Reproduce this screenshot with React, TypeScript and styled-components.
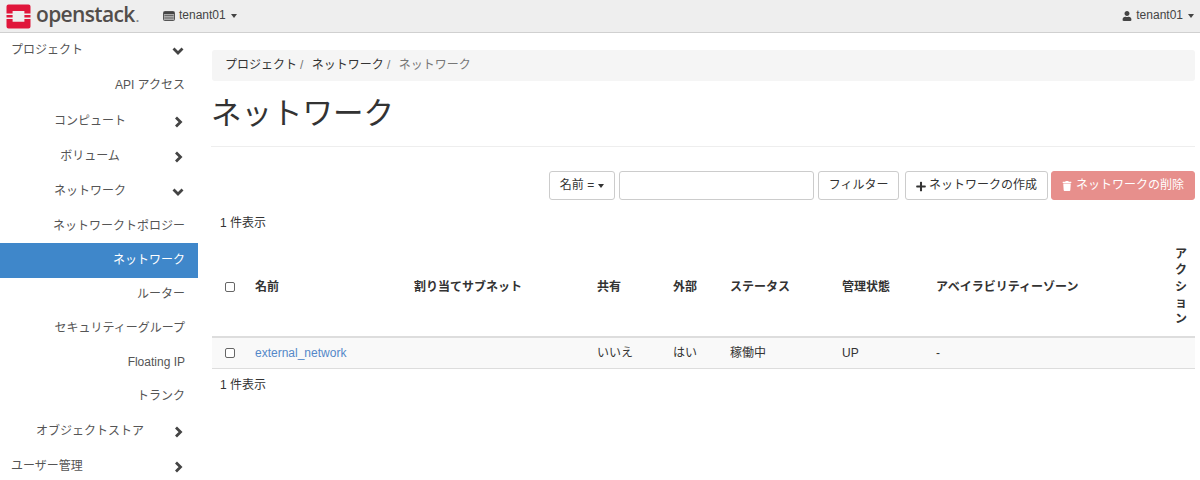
import React from "react";
import styled, { createGlobalStyle } from "styled-components";
import { FaPlus, FaTrash, FaUser } from "react-icons/fa";

const Global = createGlobalStyle`
  html, body { margin: 0; padding: 0; background: #fff; }
  body {
    font-family: "Liberation Sans", "Noto Sans CJK JP", sans-serif;
    font-size: 12px;
    line-height: 1.428;
    color: #333;
    width: 1200px;
    height: 480px;
    overflow: hidden;
  }
  * { box-sizing: border-box; }
`;

const Navbar = styled.header`
  height: 33px;
  background: #eeeeee;
  border-bottom: 1px solid #d0d0d0;
  display: flex;
  align-items: center;
  padding: 0 6px 0 6px;
`;
const Brand = styled.div`
  display: flex;
  align-items: center;
  gap: 5px;
  width: 157px;
`;
const BrandName = styled.span`
  font-family: "Open Sans", sans-serif;
  font-size: 21px;
  font-weight: 600;
  letter-spacing: -0.65px;
  color: #524d4b;
  line-height: 1;
  margin-top: -3px;
`;
const BrandDot = styled.span`
  font-family: "Open Sans", sans-serif;
  font-size: 12px;
  font-weight: 700;
  color: #888;
  line-height: 1;
  align-self: flex-end;
  margin-left: -4px;
  margin-bottom: 5px;
`;
const NavItem = styled.div`
  display: flex;
  align-items: center;
  gap: 4px;
  font-size: 12px;
  color: #444;
`;
const Spacer = styled.div`
  flex: 1;
`;
const Caret = styled.span`
  display: inline-block;
  width: 0;
  height: 0;
  margin-left: 1px;
  border-top: 4px solid currentColor;
  border-left: 3.5px solid transparent;
  border-right: 3.5px solid transparent;
`;
const Body = styled.div`
  display: flex;
  height: 447px;
`;
const Sidebar = styled.nav`
  width: 198px;
  flex: none;
  display: flex;
  flex-direction: column;
`;
const MenuRow = styled.div<{ $kind: "top" | "group" | "leaf"; $active?: boolean; $h: number }>`
  height: ${(p) => p.$h}px;
  flex: none;
  display: flex;
  align-items: center;
  position: relative;
  color: ${(p) => (p.$active ? "#fff" : "#555")};
  background: ${(p) => (p.$active ? "#3f87ca" : "transparent")};
  justify-content: ${(p) => (p.$kind === "leaf" ? "flex-end" : p.$kind === "group" ? "center" : "flex-start")};
  padding: ${(p) => (p.$kind === "leaf" ? "0 13px 0 0" : p.$kind === "group" ? "0 18px 0 0" : "0 0 0 11px")};
`;
const MenuArrow = styled.svg`
  position: absolute;
  left: 171px;
  top: 50%;
  transform: translateY(-50%);
  width: 14px;
  height: 14px;
  fill: none;
  stroke: #444;
  stroke-width: 2.8;
`;
const Main = styled.main`
  flex: 1;
  padding: 17px 5px 0 14px;
  min-width: 0;
`;
const Breadcrumb = styled.div`
  height: 31px;
  background: #f5f5f5;
  border-radius: 3px;
  display: flex;
  align-items: center;
  padding-left: 13px;
  color: #333;
`;
const Crumb = styled.span<{ $current?: boolean }>`
  color: ${(p) => (p.$current ? "#777" : "#333")};
`;
const CrumbSep = styled.span`
  color: #777;
  padding: 0 8.5px 0 3px;
`;
const Title = styled.h1`
  margin: 0 0 0 -1px;
  height: 66px;
  display: flex;
  align-items: center;
  font-size: 30.5px;
  font-weight: 400;
  color: #333;
  border-bottom: 1px solid #eeeeee;
`;
const Toolbar = styled.div`
  display: flex;
  justify-content: flex-end;
  gap: 4px;
  margin-top: 24px;
`;
const ActionGroup = styled.div`
  display: flex;
  gap: 3px;
  margin-left: 2px;
`;
const Button = styled.button<{ $danger?: boolean }>`
  height: 29px;
  padding: 1px 10px 0;
  font: inherit;
  font-size: 12px;
  border-radius: 3px;
  display: inline-flex;
  align-items: center;
  gap: 3px;
  background: ${(p) => (p.$danger ? "#e78f8c" : "#fff")};
  color: ${(p) => (p.$danger ? "#fff" : "#333")};
  border: 1px solid ${(p) => (p.$danger ? "#e78f8c" : "#ccc")};
`;
const FilterButton = styled(Button)`
  padding: 1px 9.5px 0;
`;
const IconSlot = styled.span<{ $wide?: boolean }>`
  display: inline-flex;
  font-size: ${(p) => (p.$wide ? 10 : 11)}px;
  width: ${(p) => (p.$wide ? 11 : 10)}px;
  justify-content: center;
`;
const FilterInput = styled.input`
  width: 195px;
  height: 29px;
  border: 1px solid #ccc;
  border-radius: 3px;
  background: #fff;
`;
const Count = styled.div`
  padding-left: 8px;
  font-size: 12px;
  color: #333;
`;
const TopCount = styled(Count)`
  margin-top: 15px;
`;
const BottomCount = styled(Count)`
  margin-top: 8px;
`;
const Table = styled.table`
  width: 983px;
  table-layout: fixed;
  border-collapse: collapse;
  margin-top: 6px;
`;
const Th = styled.th`
  text-align: left;
  font-weight: 700;
  padding: 8px;
  font-size: 12px;
  line-height: 16.3px;
  border-bottom: 2px solid #ddd;
  vertical-align: middle;
  color: #333;
`;
const Row = styled.tr`
  background: #f9f9f9;
`;
const Td = styled.td`
  padding: 1px 8px 0;
  height: 32px;
  font-size: 12px;
  border-bottom: 1px solid #ddd;
  vertical-align: middle;
  color: #333;
`;
const Link = styled.a`
  color: #5488c8;
`;
const Check = styled.span`
  display: block;
  width: 10px;
  height: 10px;
  margin-left: 5px;
  border: 1.5px solid #666;
  border-radius: 2px;
  background: #fff;
`;
const LogoSvg = styled.svg`
  flex: none;
`;

const menu: { label: string; kind: "top" | "group" | "leaf"; arrow?: "down" | "right"; active?: boolean; h: number }[] = [
  { label: "プロジェクト", kind: "top", arrow: "down", h: 35 },
  { label: "API アクセス", kind: "leaf", h: 36 },
  { label: "コンピュート", kind: "group", arrow: "right", h: 35 },
  { label: "ボリューム", kind: "group", arrow: "right", h: 35 },
  { label: "ネットワーク", kind: "group", arrow: "down", h: 36 },
  { label: "ネットワークトポロジー", kind: "leaf", h: 33 },
  { label: "ネットワーク", kind: "leaf", active: true, h: 35 },
  { label: "ルーター", kind: "leaf", h: 34 },
  { label: "セキュリティーグループ", kind: "leaf", h: 33.5 },
  { label: "Floating IP", kind: "leaf", h: 34 },
  { label: "トランク", kind: "leaf", h: 35 },
  { label: "オブジェクトストア", kind: "group", arrow: "right", h: 35 },
  { label: "ユーザー管理", kind: "top", arrow: "right", h: 35 },
];

const widths = [35, 159, 183, 76, 57, 112, 94, 239, 28];
const headers = ["名前", "割り当てサブネット", "共有", "外部", "ステータス", "管理状態", "アベイラビリティーゾーン", "アクション"];

const Logo = () => (
  <LogoSvg width="25" height="25" viewBox="0 0 25 25">
    <path
      fill="#e0163b"
      fillRule="evenodd"
      d="M2.5 0.5H22.5A2 2 0 0 1 24.5 2.5V9.6H18.4V7H6.6V9.6H0.5V2.5A2 2 0 0 1 2.5 0.5ZM0.5 15H6.6V17.8H18.4V15H24.5V22.5A2 2 0 0 1 22.5 24.5H2.5A2 2 0 0 1 0.5 22.5ZM0.5 11H6.6V13.6H0.5ZM18.4 11H24.5V13.6H18.4Z"
    />
  </LogoSvg>
);

const TenantIcon = () => (
  <svg width="12" height="10" viewBox="0 0 12 10">
    <rect x="0.5" y="0.5" width="11" height="9" rx="1" fill="#aaa" stroke="#555" />
    <rect x="1" y="1" width="10" height="2" fill="#444" />
    <rect x="1.5" y="4" width="9" height="1" fill="#666" />
    <rect x="1.5" y="6.5" width="9" height="1" fill="#666" />
  </svg>
);

const Arrow = ({ dir }: { dir: "down" | "right" }) => (
  <MenuArrow viewBox="0 0 14 14">
    <path d={dir === "down" ? "M2.5 4.5L7 9L11.5 4.5" : "M5 2.5L9.5 7L5 11.5"} />
  </MenuArrow>
);

export default function App() {
  return (
    <>
      <Global />
      <Navbar>
        <Brand>
          <Logo />
          <BrandName>openstack</BrandName>
          <BrandDot>.</BrandDot>
        </Brand>
        <NavItem>
          <TenantIcon />
          tenant01
          <Caret />
        </NavItem>
        <Spacer />
        <NavItem>
          <FaUser size={10} />
          tenant01
          <Caret />
        </NavItem>
      </Navbar>
      <Body>
        <Sidebar>
          {menu.map((m, i) => (
            <MenuRow key={i} $kind={m.kind} $active={m.active} $h={m.h}>
              {m.label}
              {m.arrow && <Arrow dir={m.arrow} />}
            </MenuRow>
          ))}
        </Sidebar>
        <Main>
          <Breadcrumb>
            <Crumb>プロジェクト</Crumb>
            <CrumbSep>/</CrumbSep>
            <Crumb>ネットワーク</Crumb>
            <CrumbSep>/</CrumbSep>
            <Crumb $current>ネットワーク</Crumb>
          </Breadcrumb>
          <Title>ネットワーク</Title>
          <Toolbar>
            <Button>
              名前 =<Caret />
            </Button>
            <FilterInput />
            <FilterButton>フィルター</FilterButton>
            <ActionGroup>
              <Button>
                <IconSlot>
                  <FaPlus />
                </IconSlot>
                ネットワークの作成
              </Button>
              <Button $danger>
                <IconSlot $wide>
                  <FaTrash />
                </IconSlot>
                ネットワークの削除
              </Button>
            </ActionGroup>
          </Toolbar>
          <TopCount>1 件表示</TopCount>
          <Table>
            <colgroup>
              {widths.map((w, i) => (
                <col key={i} style={{ width: w }} />
              ))}
            </colgroup>
            <thead>
              <tr>
                <Th>
                  <Check />
                </Th>
                {headers.map((h) => (
                  <Th key={h}>{h}</Th>
                ))}
              </tr>
            </thead>
            <tbody>
              <Row>
                <Td>
                  <Check />
                </Td>
                <Td>
                  <Link>external_network</Link>
                </Td>
                <Td />
                <Td>いいえ</Td>
                <Td>はい</Td>
                <Td>稼働中</Td>
                <Td>UP</Td>
                <Td>-</Td>
                <Td />
              </Row>
            </tbody>
          </Table>
          <BottomCount>1 件表示</BottomCount>
        </Main>
      </Body>
    </>
  );
}
